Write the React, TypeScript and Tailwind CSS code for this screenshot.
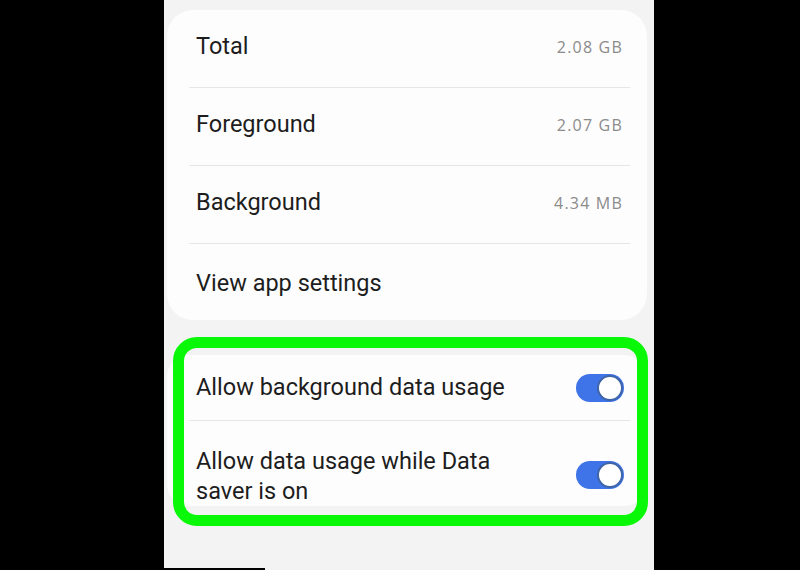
import React from "react";

const usage = [
  { label: "Total", value: "2.08 GB" },
  { label: "Foreground", value: "2.07 GB" },
  { label: "Background", value: "4.34 MB" },
];

function Toggle() {
  return (
    <div className="relative w-[48px] h-[28px] rounded-full bg-[#3e74e8] shrink-0">
      <div className="absolute right-[1px] top-[1px] w-[26px] h-[26px] rounded-full bg-white border-2 border-[#3f64a8]" />
    </div>
  );
}

function Divider() {
  return <div className="h-px bg-[#e6e6e6] ml-[22px] mr-[17px]" />;
}

export default function App() {
  return (
    <div
      className="w-[800px] h-[570px] bg-black flex overflow-hidden"
      style={{ fontFamily: "Roboto, 'Noto Sans', sans-serif" }}
    >
      <div className="relative ml-[164px] w-[490px] h-full bg-[#f3f3f3] pl-[3px] pr-[7px] pt-[10px] flex flex-col">
        {/* usage card */}
        <div className="bg-[#fdfdfd] rounded-[26px] flex flex-col shrink-0">
          {usage.map((row) => (
            <React.Fragment key={row.label}>
              <div className="h-[77px] flex items-center justify-between pl-[29px] pr-[24px] pb-[3px]">
                <span className="text-[23.5px] text-[#1d1d1d]">{row.label}</span>
                <span
                  className="text-[16px] tracking-[1.2px] text-[#8b8b8b]"
                  style={{ fontFamily: "'Open Sans', Roboto, sans-serif" }}
                >
                  {row.value}
                </span>
              </div>
              <Divider />
            </React.Fragment>
          ))}
          <div className="h-[76px] flex items-center pl-[29px] pt-[4px]">
            <span className="text-[23.5px] text-[#1d1d1d]">View app settings</span>
          </div>
        </div>

        {/* data saver card */}
        <div className="mt-[35px] h-[151px] shrink-0 overflow-hidden bg-[#fdfdfd] rounded-[22px] flex flex-col">
          <div className="h-[77px] flex items-center justify-between pl-[29px] pr-[23px]">
            <span className="text-[23.5px] text-[#1d1d1d]">Allow background data usage</span>
            <Toggle />
          </div>
          <Divider />
          <div className="flex items-start justify-between pl-[29px] pr-[23px] pt-[25px]">
            <span className="text-[23.5px] leading-[30px] text-[#1d1d1d] w-[320px]">
              Allow data usage while Data saver is on
            </span>
            <div className="mt-[15px]">
              <Toggle />
            </div>
          </div>
        </div>

        {/* highlight annotation */}
        <div className="absolute left-[9px] top-[337px] w-[475px] h-[189px] border-[11px] border-[#08f808] rounded-[24px]" />

        {/* black edge at the bottom left of the capture */}
        <div className="absolute left-0 bottom-0 w-[101px] h-[2px] bg-black" />
      </div>
    </div>
  );
}
